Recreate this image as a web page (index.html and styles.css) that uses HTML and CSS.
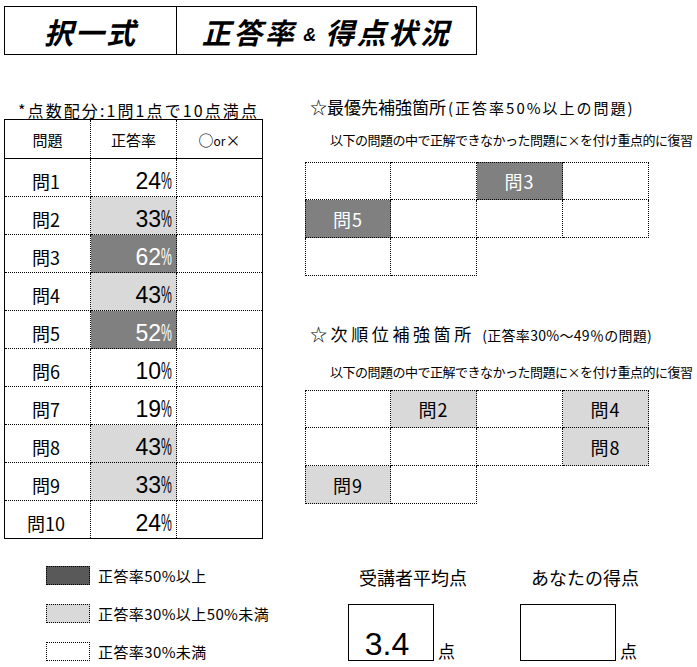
FILE: index.html
```html
<!DOCTYPE html>
<html lang="ja">
<head>
<meta charset="utf-8">
<title>択一式 正答率＆得点状況</title>
<link rel="stylesheet" href="styles.css">
</head>
<body>
<header class="title">
  <div class="title-cell title-left">択一式</div>
  <div class="title-cell title-right">正答率<span class="amp">&amp;</span>得点状況</div>
</header>

<main class="main">
  <section class="result">
    <p class="caption">*点数配分:1問1点で10点満点</p>
    <table class="results">
      <colgroup><col class="col"><col class="col"><col class="col"></colgroup>
      <thead>
        <tr><th>問題</th><th>正答率</th><th>○<span class="or">or</span>×</th></tr>
      </thead>
      <tbody>
        <tr><td class="q">問1</td><td class="rate">24<span class="pct">%</span></td><td></td></tr>
        <tr><td class="q">問2</td><td class="rate rate-light">33<span class="pct">%</span></td><td></td></tr>
        <tr><td class="q">問3</td><td class="rate rate-dark">62<span class="pct">%</span></td><td></td></tr>
        <tr><td class="q">問4</td><td class="rate rate-light">43<span class="pct">%</span></td><td></td></tr>
        <tr><td class="q">問5</td><td class="rate rate-dark">52<span class="pct">%</span></td><td></td></tr>
        <tr><td class="q">問6</td><td class="rate">10<span class="pct">%</span></td><td></td></tr>
        <tr><td class="q">問7</td><td class="rate">19<span class="pct">%</span></td><td></td></tr>
        <tr><td class="q">問8</td><td class="rate rate-light">43<span class="pct">%</span></td><td></td></tr>
        <tr><td class="q">問9</td><td class="rate rate-light">33<span class="pct">%</span></td><td></td></tr>
        <tr><td class="q">問10</td><td class="rate">24<span class="pct">%</span></td><td></td></tr>
      </tbody>
    </table>
  </section>

  <section class="focus">
    <div class="focus-block">
      <h2 class="focus-title">☆最優先補強箇所<span class="focus-note">(正答率50%以上の問題)</span></h2>
      <p class="focus-hint">以下の問題の中で正解できなかった問題に×を付け重点的に復習</p>
      <div class="qgrid">
        <div class="cell"></div>
        <div class="cell"></div>
        <div class="cell cell-dark">問3</div>
        <div class="cell"></div>
        <div class="cell cell-dark">問5</div>
        <div class="cell"></div>
        <div class="cell"></div>
        <div class="cell"></div>
        <div class="cell"></div>
        <div class="cell"></div>
      </div>
    </div>

    <div class="focus-block focus-block-next">
      <h2 class="focus-title focus-title-next">☆次順位補強箇所 <span class="focus-note focus-note-next">(正答率30%～49％の問題)</span></h2>
      <p class="focus-hint">以下の問題の中で正解できなかった問題に×を付け重点的に復習</p>
      <div class="qgrid">
        <div class="cell"></div>
        <div class="cell cell-light">問2</div>
        <div class="cell"></div>
        <div class="cell cell-light">問4</div>
        <div class="cell"></div>
        <div class="cell"></div>
        <div class="cell"></div>
        <div class="cell cell-light">問8</div>
        <div class="cell cell-light">問9</div>
        <div class="cell"></div>
      </div>
    </div>
  </section>
</main>

<footer class="bottom">
  <ul class="legend">
    <li><span class="swatch swatch-dark"></span>正答率50%以上</li>
    <li><span class="swatch swatch-light"></span>正答率30%以上50%未満</li>
    <li><span class="swatch"></span>正答率30%未満</li>
  </ul>
  <div class="scores">
    <div class="score">
      <div class="score-label">受講者平均点</div>
      <div class="score-row">
        <div class="score-box">3.4</div>
        <span class="unit">点</span>
      </div>
    </div>
    <div class="score">
      <div class="score-label">あなたの得点</div>
      <div class="score-row">
        <div class="score-box score-box-wide"></div>
        <span class="unit">点</span>
      </div>
    </div>
  </div>
</footer>
</body>
</html>
```

FILE: styles.css
```css
* {
  box-sizing: border-box;
}

body {
  margin: 0;
  width: 697px;
  height: 667px;
  overflow: hidden;
  background: #fff;
  color: #000;
  font-family: "Noto Sans CJK JP", "Noto Sans", sans-serif;
}

/* ---------- title ---------- */
.title {
  display: flex;
  width: 473px;
  height: 49px;
  margin: 6px 0 0 4px;
  border: 1px solid #000;
}

.title-cell {
  display: flex;
  align-items: center;
  justify-content: center;
  font-size: 29px;
  font-weight: 700;
  font-style: italic;
  line-height: 1;
  padding-top: 2px;
}

.title-left {
  width: 172px;
  border-right: 1px solid #000;
  letter-spacing: 2px;
}

.title-right {
  flex: 1;
  letter-spacing: 2.5px;
  padding-left: 0;
}

.amp {
  font-size: 18px;
  margin: 6px 9px 0 7px;
  font-family: "Liberation Sans", sans-serif;
  letter-spacing: 0;
}

/* ---------- main ---------- */
.main {
  display: flex;
  align-items: flex-start;
}

.result {
  width: 259px;
  margin-left: 4px;
}

.caption {
  margin: 47px 0 0;
  padding-left: 14px;
  height: 17px;
  font-size: 16px;
  line-height: 17px;
  letter-spacing: 2.1px;
  white-space: nowrap;
}

.results {
  width: 259px;
  table-layout: fixed;
  border-collapse: collapse;
  border: 1px solid #000;
}

.col {
  width: 86px;
}

.results th,
.results td {
  border: 1px dotted #000;
  padding: 0;
  height: 38px;
}

.results th {
  height: 39px;
  border-bottom: 1px solid #000;
  font-weight: 400;
  font-size: 15px;
  text-align: center;
}

.or {
  font-size: 12px;
}

.q {
  text-align: center;
  font-size: 18px;
  padding-top: 6px !important;
  padding-right: 3px !important;
}

.rate {
  text-align: right;
  vertical-align: bottom;
  padding-right: 4px !important;
  padding-bottom: 3px !important;
  font-family: "Liberation Sans", sans-serif;
  font-size: 23px;
  line-height: 23px;
}

.pct {
  display: inline-block;
  width: 11px;
  transform: scaleX(0.53);
  transform-origin: left center;
}

.rate-light {
  background: #d9d9d9;
}

.rate-dark {
  background: #808080;
  color: #fff;
}

/* ---------- focus sections ---------- */
.focus {
  margin-left: 42px;
}

.focus-title {
  margin: 41px 0 0;
  padding-left: 5px;
  font-size: 17px;
  font-weight: 400;
  line-height: 22px;
  white-space: nowrap;
}

.focus-title-next {
  letter-spacing: 3.6px;
}

.focus-note {
  font-size: 15px;
  letter-spacing: 2px;
  margin-left: 2px;
}

.focus-note-next {
  font-size: 14px;
  letter-spacing: 0.3px;
  margin-left: 0;
}

.focus-hint {
  margin: 12px 0 0;
  padding-left: 25px;
  font-size: 13px;
  line-height: 18px;
  letter-spacing: -0.5px;
  white-space: nowrap;
}

.qgrid {
  display: grid;
  grid-template-columns: repeat(4, 86px);
  grid-auto-rows: 38px;
  margin-top: 13px;
}

.focus-block-next .focus-title {
  margin-top: 47px;
}

.focus-block-next .focus-hint {
  margin-top: 17px;
}

.focus-block-next .qgrid {
  margin-top: 9px;
}

.cell {
  display: flex;
  align-items: center;
  justify-content: center;
  border-right: 1px dotted #000;
  border-bottom: 1px dotted #000;
  font-size: 18px;
  letter-spacing: 1px;
}

.cell:nth-child(-n+4) {
  border-top: 1px dotted #000;
}

.cell:nth-child(4n+1) {
  border-left: 1px dotted #000;
}

.cell-dark {
  background: #808080;
  color: #fff;
}

.cell-light {
  background: #d9d9d9;
}

/* ---------- bottom ---------- */
.bottom {
  display: flex;
  margin-top: 27px;
}

.legend {
  list-style: none;
  margin: 0 0 0 46px;
  padding: 0;
  width: 302px;
  flex: none;
  display: flex;
  flex-direction: column;
  gap: 19px;
}

.legend li {
  display: flex;
  align-items: center;
  gap: 8px;
  height: 19px;
  font-size: 15px;
  letter-spacing: 0.4px;
  white-space: nowrap;
}

.swatch {
  flex: none;
  width: 44px;
  height: 19px;
  border: 1px dotted #000;
  background: #fff;
}

.swatch-dark {
  background: #595959;
}

.swatch-light {
  background: #d9d9d9;
}

.scores {
  display: flex;
}

.score {
  flex: none;
  width: 172px;
}

.score-label {
  margin: 0 0 16px 11px;
  font-size: 18px;
  line-height: 22px;
  white-space: nowrap;
}

.score-row {
  display: flex;
  align-items: flex-end;
  gap: 4px;
}

.score-box {
  flex: none;
  width: 86px;
  height: 57px;
  border: 1px solid #000;
  display: flex;
  align-items: flex-end;
  justify-content: center;
  padding-right: 8px;
  font-family: "Liberation Sans", sans-serif;
  font-size: 32px;
  line-height: 32px;
}

.score-box-wide {
  width: 96px;
}

.unit {
  flex: none;
  font-size: 17px;
  line-height: 20px;
}
```
